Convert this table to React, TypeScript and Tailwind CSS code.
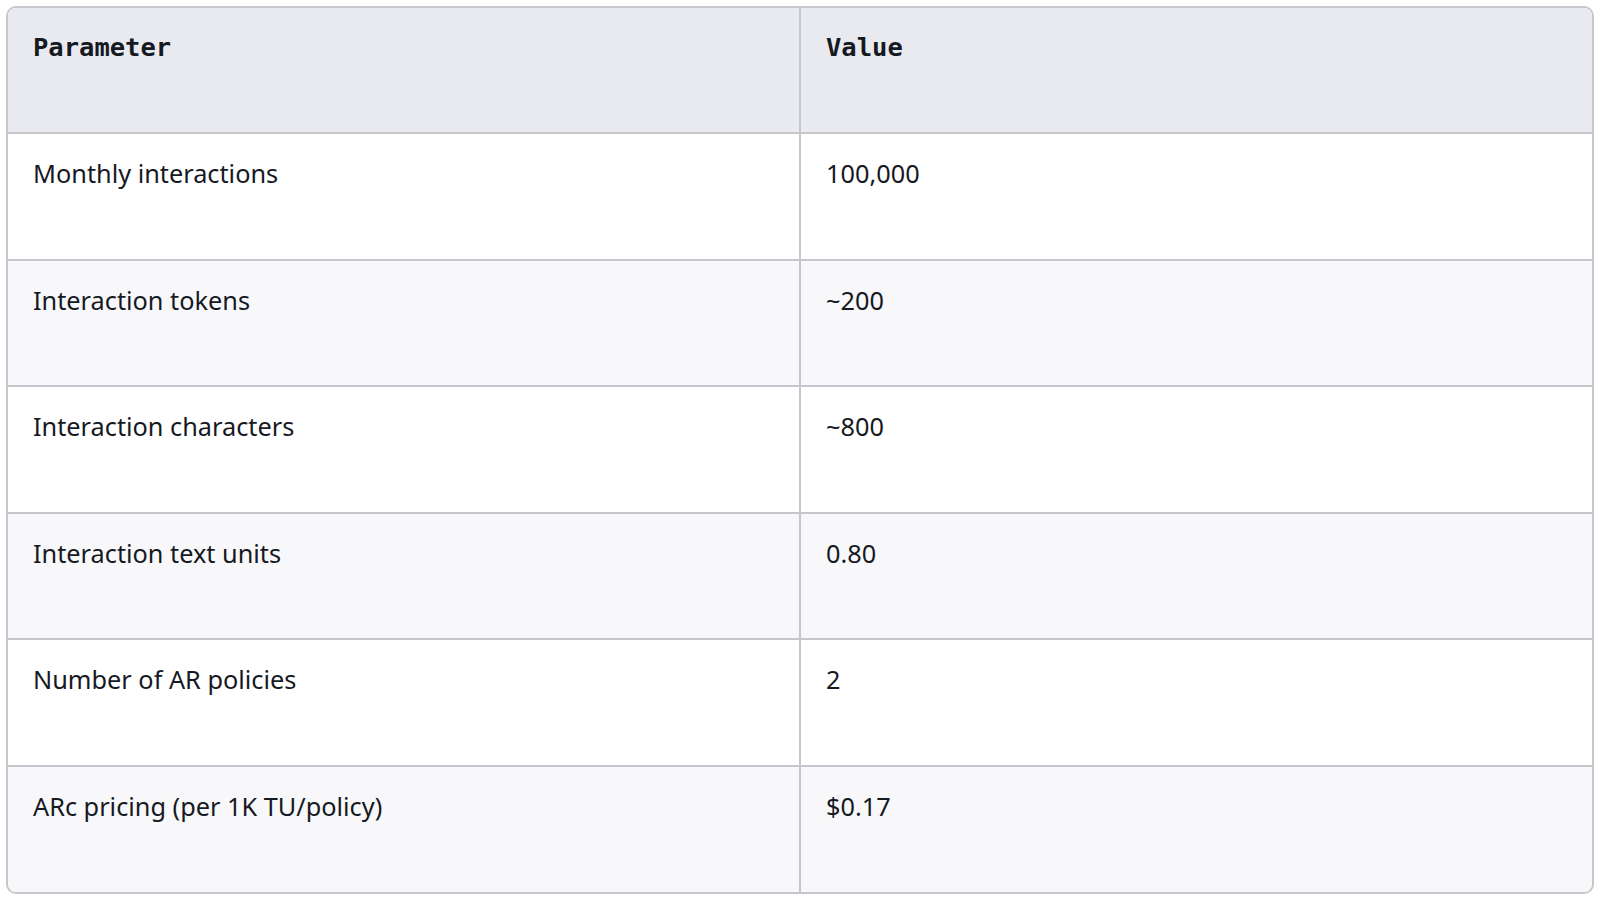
const rows = [
  ["Monthly interactions", "100,000"],
  ["Interaction tokens", "~200"],
  ["Interaction characters", "~800"],
  ["Interaction text units", "0.80"],
  ["Number of AR policies", "2"],
  ["ARc pricing (per 1K TU/policy)", "$0.17"],
];

export default function App() {
  return (
    <div className="w-[1600px] h-[900px] bg-white p-[6px]">
      <div className="border-2 border-[#c6c6cd] rounded-[10px] overflow-hidden">
        <table className="w-full border-collapse text-[#16191f]">
          <thead>
            <tr className="bg-[#e9e9f0]">
              <th className="w-1/2 h-[125px] align-top text-left px-[25px] pt-[21px] border-r-2 border-[#c6c6cd] font-bold text-[25.5px] leading-[36px] [font-family:'DejaVu_Sans_Mono',monospace]">
                Parameter
              </th>
              <th className="w-1/2 h-[125px] align-top text-left px-[25px] pt-[21px] font-bold text-[25.5px] leading-[36px] [font-family:'DejaVu_Sans_Mono',monospace]">
                Value
              </th>
            </tr>
          </thead>
          <tbody>
            {rows.map(([param, value], i) => (
              <tr key={param} className={i % 2 === 0 ? "bg-white" : "bg-[#f8f8fa]"}>
                <td className="h-[126.5px] align-top px-[25px] pt-[21px] border-t-2 border-r-2 border-[#c6c6cd] text-[25.3px] leading-[36px] [font-family:'Noto_Sans',sans-serif]">
                  {param}
                </td>
                <td className="h-[126.5px] align-top px-[25px] pt-[21px] border-t-2 border-[#c6c6cd] text-[25.3px] leading-[36px] [font-family:'Noto_Sans',sans-serif]">
                  {value}
                </td>
              </tr>
            ))}
          </tbody>
        </table>
      </div>
    </div>
  );
}
